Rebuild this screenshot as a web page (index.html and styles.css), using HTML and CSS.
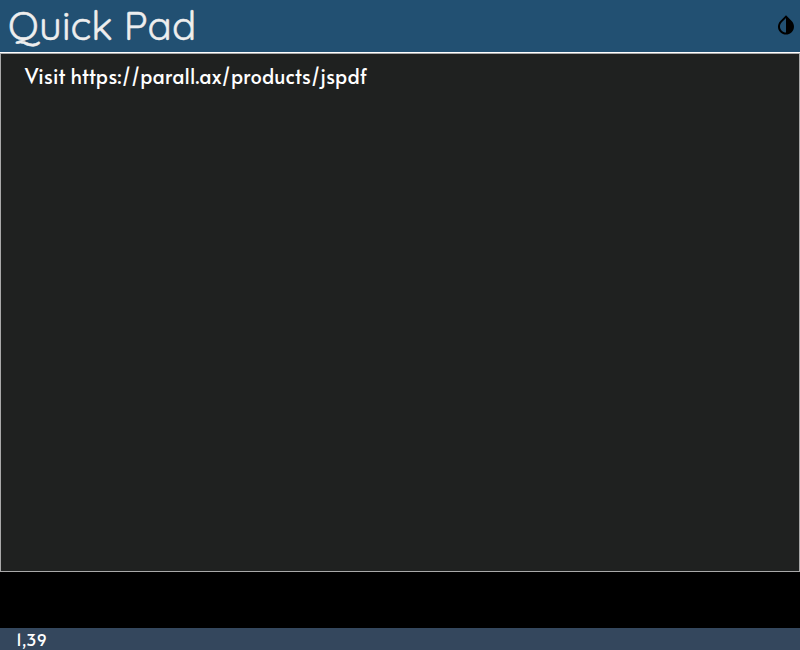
FILE: index.html
```html
<!DOCTYPE html>
<html lang="en">
<head>
<meta charset="utf-8">
<title>Quick Pad</title>
<link rel="stylesheet" href="styles.css">
</head>
<body>
<header class="header">
  <h1 class="title">Quick Pad</h1>
  <svg class="theme-icon" viewBox="0 0 24 24" aria-hidden="true"><path d="M17.66 7.93L12 2.27 6.34 7.93c-3.12 3.12-3.12 8.19 0 11.31C7.9 20.8 9.95 21.58 12 21.58c2.05 0 4.1-.78 5.66-2.34 3.12-3.12 3.12-8.19 0-11.31zM12 19.59c-1.6 0-3.11-.62-4.24-1.76C6.62 16.69 6 15.19 6 13.59s.62-3.11 1.76-4.24L12 5.1v14.49z"/></svg>
</header>
<main class="pad">Visit https://parall.ax/products/jspdf</main>
<footer class="status">1,39</footer>
</body>
</html>
```
FILE: styles.css
```css
* { box-sizing: border-box; }
body {
  margin: 0;
  height: 650px;
  display: flex;
  flex-direction: column;
  background: #000;
  color: #fff;
  font-family: Quicksand, Lato, sans-serif;
  overflow: hidden;
}
.header {
  height: 53px;
  display: flex;
  align-items: center;
  justify-content: space-between;
  padding: 0 2px 2px 8px;
  background: #225072;
  border-bottom: 1px solid #fff;
}
.title {
  margin: 0;
  font-size: 40px;
  line-height: 50px;
  font-weight: 400;
  letter-spacing: 0.08px;
  color: #eee;
  -webkit-text-stroke: 0.5px #eee;
}
.theme-icon { width: 24px; height: 24px; fill: #000; }
.pad {
  height: 519px;
  padding: 8px 24px;
  border: 1px solid #a9a9a9;
  background: #1f2120;
  font-family: Alata, Lato, sans-serif;
  font-size: 20px;
  line-height: 29px;
  font-kerning: none;
  letter-spacing: 0.09px;
}
.status {
  height: 22px;
  margin-top: auto;
  padding-left: 16px;
  background: #34475d;
  font-family: Alata, Lato, sans-serif;
  font-size: 16px;
  line-height: 23px;
  font-kerning: none;
}
```
